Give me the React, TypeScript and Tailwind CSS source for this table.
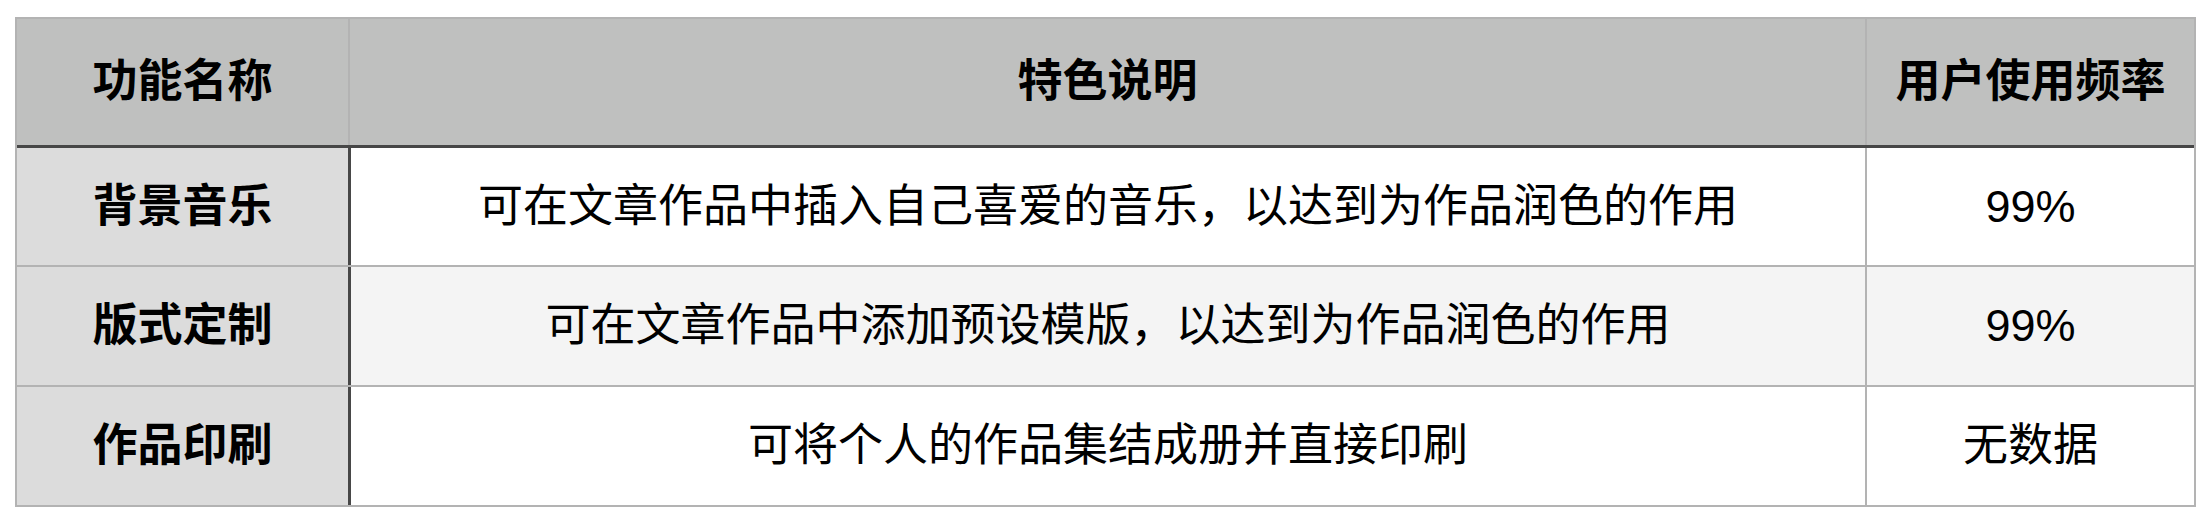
const rows = [
  { name: "背景音乐", desc: "可在文章作品中插入自己喜爱的音乐，以达到为作品润色的作用", rate: "99%", bg: "bg-white", h: "h-[119px] border-b-2" },
  { name: "版式定制", desc: "可在文章作品中添加预设模版，以达到为作品润色的作用", rate: "99%", bg: "bg-[#f4f4f4]", h: "h-[120px] border-b-2" },
  { name: "作品印刷", desc: "可将个人的作品集结成册并直接印刷", rate: "无数据", bg: "bg-white", h: "h-[118px]" },
];

export default function App() {
  return (
    <div className="w-[2212px] h-[528px] bg-white pl-[15px] pt-[17px] font-['Liberation_Sans','Noto_Sans_CJK_SC',sans-serif] text-[45px] text-black">
      <div className="w-[2181px] border-2 border-[#b3b3b3]">
        {/* header */}
        <div className="flex h-[129px] bg-[#bfc0bf] border-b-[3px] border-[#474747] font-bold">
          <div className="w-[333px] border-r-2 border-[#b3b3b3] flex items-center justify-center">功能名称</div>
          <div className="w-[1517px] border-r-2 border-[#b3b3b3] flex items-center justify-center">特色说明</div>
          <div className="flex-1 flex items-center justify-center">用户使用频率</div>
        </div>

        {rows.map((r) => (
          <div key={r.name} className={`flex ${r.h} border-[#b3b3b3] ${r.bg}`}>
            <div className="w-[334px] bg-[#dcdcdc] border-r-[3px] border-[#474747] flex items-center justify-center font-bold">
              {r.name}
            </div>
            <div className="w-[1516px] border-r-2 border-[#b3b3b3] flex items-center justify-center">
              {r.desc}
            </div>
            <div className="flex-1 flex items-center justify-center">{r.rate}</div>
          </div>
        ))}
      </div>
    </div>
  );
}
